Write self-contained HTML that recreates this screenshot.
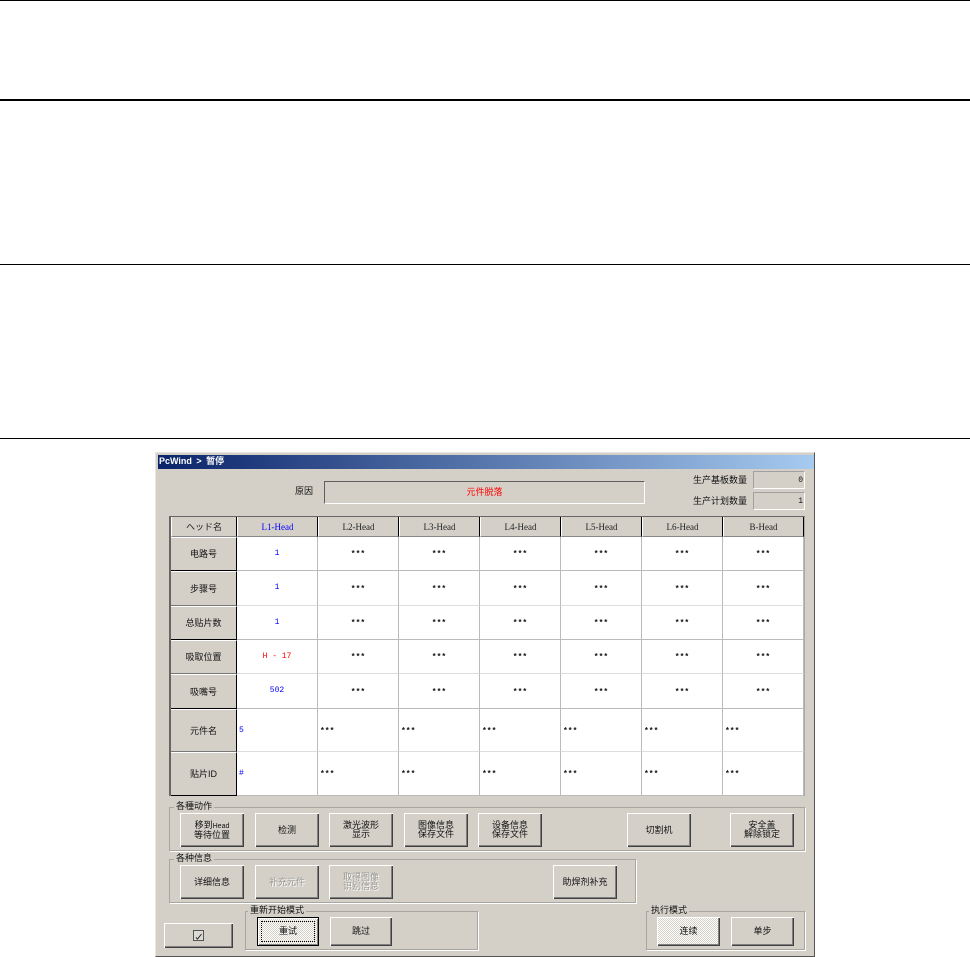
<!DOCTYPE html>
<html lang="zh">
<head>
<meta charset="utf-8">
<title>PcWind</title>
<style>
html,body{margin:0;padding:0;background:#fff;}
body{position:relative;width:970px;height:957px;overflow:hidden;font-family:"Liberation Sans","WenQuanYi Zen Hei","Noto Sans CJK SC",sans-serif;font-size:9px;color:#111;}
div{box-sizing:border-box;position:absolute;}
.line{left:0;width:970px;background:#000;}
#win{left:155px;top:452px;width:660px;height:505px;background:#d4d0c8;border-top:1px solid #e8e6e0;border-left:1px solid #e8e6e0;border-right:1px solid #555;border-bottom:1px solid #555;}
#title{left:158px;top:455px;width:656px;height:14px;background:linear-gradient(90deg,#0a246a,#a6caf0);color:#fff;font-size:9px;line-height:13px;padding-left:1px;font-weight:bold;word-spacing:2px;}
.t{white-space:nowrap;line-height:12px;}
.sunk{background:#d4d0c8;border-top:1px solid #606060;border-left:1px solid #606060;border-right:1px solid #fff;border-bottom:1px solid #fff;}
.val{border-top-color:#a0a0a0;border-left-color:#a0a0a0;text-align:right;padding-right:1px;line-height:18px;font-family:"Liberation Mono",monospace;font-size:8px;}
#tbwrap{left:169px;top:516px;width:636px;height:280px;background:#fff;border-top:1px solid #666;border-left:2px solid #666;border-right:1px solid #aaa;border-bottom:1px solid #888;}
table{position:absolute;left:0;top:0;border-collapse:separate;border-spacing:0;table-layout:fixed;width:633px;}
td{padding:0;margin:0;box-sizing:border-box;text-align:center;vertical-align:middle;border-right:1px solid #bbb;border-bottom:1px solid #bbb;font-family:"Liberation Mono","WenQuanYi Zen Hei",monospace;font-size:8px;line-height:10px;overflow:hidden;background:#fff;color:#111;}
tr.h td{background:#d4d0c8;border-right:1px solid #000;border-left:1px solid #fff;border-bottom:1px solid #888;font-family:"Liberation Serif","Liberation Mono",serif;font-size:9px;color:#222;}
td.r{background:#d4d0c8;border-right:1px solid #000;border-top:1px solid #fff;border-bottom:1px solid #000;font-family:"Liberation Sans","WenQuanYi Zen Hei","Noto Sans CJK SC",sans-serif;font-size:9px;}
tr.l2 td.r{border-bottom-color:#777;}
td.l{text-align:left;padding-left:2px;padding-top:1px;}
td.s{font-weight:bold;padding-top:3px;}
tr.l2 td:not(.r){border-bottom-color:#ddd;}
.grp{border:1px solid #a8a6a0;box-shadow:1px 1px 0 #fff;}
.gt{background:#d4d0c8;padding:0 2px;white-space:nowrap;line-height:10px;font-size:9px;}
.btn{background:#d4d0c8;box-shadow:inset 1px 1px 0 #fff,inset -1px -1px 0 #404040,inset -2px -2px 0 #808080;text-align:center;display:flex;align-items:center;justify-content:center;line-height:9px;font-size:9px;color:#111;}
.dis{color:#9a9892;text-shadow:1px 1px 0 #fff;}
.def{border:1px solid #000;box-shadow:inset 1px 1px 0 #fff,inset -1px -1px 0 #808080;}
.dither{background-color:#d4d0c8;background-image:conic-gradient(#fff 25%,#d4d0c8 0 50%,#fff 0 75%,#d4d0c8 0);background-size:2px 2px;}
.focus{left:3px;top:3px;right:3px;bottom:3px;border:1px dotted #000;}
small{font-size:7px;}
</style>
</head>
<body>
<div class="line" style="top:0;height:1px"></div>
<div class="line" style="top:99px;height:2px"></div>
<div class="line" style="top:264px;height:1px"></div>
<div class="line" style="top:438px;height:1px"></div>

<div id="win"></div>
<div id="title">PcWind &gt; 暂停</div>

<div class="t" style="left:295px;top:485px">原因</div>
<div class="sunk" style="left:324px;top:481px;width:321px;height:23px;color:#f00;text-align:center;line-height:20px">元件脱落</div>

<div class="t" style="left:693px;top:474px">生产基板数量</div>
<div class="sunk val" style="left:753px;top:471px;width:52px;height:18px">0</div>
<div class="t" style="left:693px;top:495px">生产计划数量</div>
<div class="sunk val" style="left:753px;top:492px;width:52px;height:18px">1</div>

<div id="tbwrap">
<table>
<colgroup><col style="width:66px"><col style="width:81px"><col style="width:81px"><col style="width:81px"><col style="width:81px"><col style="width:81px"><col style="width:81px"><col style="width:81px"></colgroup>
<tr class="h" style="height:20px"><td style="height:20px;font-family:'Liberation Sans','Noto Sans CJK JP',sans-serif;font-size:9px">ヘッド名</td><td style="color:#00f">L1-Head</td><td>L2-Head</td><td>L3-Head</td><td>L4-Head</td><td>L5-Head</td><td>L6-Head</td><td>B-Head</td></tr>
<tr><td class="r" style="height:34px">电路号</td><td style="color:#00f">1</td><td class="s">***</td><td class="s">***</td><td class="s">***</td><td class="s">***</td><td class="s">***</td><td class="s">***</td></tr>
<tr class="l2"><td class="r" style="height:35px">步骤号</td><td style="color:#00f">1</td><td class="s">***</td><td class="s">***</td><td class="s">***</td><td class="s">***</td><td class="s">***</td><td class="s">***</td></tr>
<tr><td class="r" style="height:34px">总贴片数</td><td style="color:#00f">1</td><td class="s">***</td><td class="s">***</td><td class="s">***</td><td class="s">***</td><td class="s">***</td><td class="s">***</td></tr>
<tr class="l2"><td class="r" style="height:34px">吸取位置</td><td style="color:#f00">H - 17</td><td class="s">***</td><td class="s">***</td><td class="s">***</td><td class="s">***</td><td class="s">***</td><td class="s">***</td></tr>
<tr><td class="r" style="height:35px">吸嘴号</td><td style="color:#00f">502</td><td class="s">***</td><td class="s">***</td><td class="s">***</td><td class="s">***</td><td class="s">***</td><td class="s">***</td></tr>
<tr class="l2"><td class="r" style="height:43px">元件名</td><td class="l" style="color:#00f">5</td><td class="l s">***</td><td class="l s">***</td><td class="l s">***</td><td class="l s">***</td><td class="l s">***</td><td class="l s">***</td></tr>
<tr><td class="r" style="height:44px">贴片ID</td><td class="l" style="color:#00f">#</td><td class="l s">***</td><td class="l s">***</td><td class="l s">***</td><td class="l s">***</td><td class="l s">***</td><td class="l s">***</td></tr>
</table>
</div>

<div class="grp" style="left:169px;top:807px;width:636px;height:44px"></div>
<div class="gt" style="left:174px;top:801px">各種动作</div>
<div class="btn" style="left:180px;top:813px;width:64px;height:34px"><span>移到<small>Head</small><br>等待位置</span></div>
<div class="btn" style="left:255px;top:813px;width:64px;height:34px">检测</div>
<div class="btn" style="left:329px;top:813px;width:64px;height:34px"><span>激光波形<br>显示</span></div>
<div class="btn" style="left:404px;top:813px;width:64px;height:34px"><span>图像信息<br>保存文件</span></div>
<div class="btn" style="left:478px;top:813px;width:64px;height:34px"><span>设备信息<br>保存文件</span></div>
<div class="btn" style="left:627px;top:813px;width:64px;height:34px">切割机</div>
<div class="btn" style="left:730px;top:813px;width:64px;height:34px"><span>安全盖<br>解除锁定</span></div>

<div class="grp" style="left:169px;top:859px;width:467px;height:44px"></div>
<div class="gt" style="left:174px;top:853px">各种信息</div>
<div class="btn" style="left:180px;top:865px;width:64px;height:34px">详细信息</div>
<div class="btn dis" style="left:255px;top:865px;width:64px;height:34px">补充元件</div>
<div class="btn dis" style="left:329px;top:865px;width:64px;height:34px"><span>取得图像<br>识别信息</span></div>
<div class="btn" style="left:553px;top:865px;width:64px;height:34px">助焊剂补充</div>

<div class="btn" style="left:164px;top:923px;width:69px;height:25px"></div>
<svg style="position:absolute;left:193px;top:930px" width="11" height="11" viewBox="0 0 11 11"><rect x="0.5" y="0.5" width="10" height="10" fill="#dcdad4" stroke="#555"/><path d="M3 7.5 L4.5 9 L8.5 4" fill="none" stroke="#222" stroke-width="1"/></svg>

<div class="grp" style="left:245px;top:911px;width:233px;height:39px"></div>
<div class="gt" style="left:248px;top:905px">重新开始模式</div>
<div class="btn def dither" style="left:257px;top:917px;width:62px;height:29px"><div class="focus"></div><span style="position:relative">重试</span></div>
<div class="btn" style="left:330px;top:917px;width:62px;height:29px">跳过</div>

<div class="grp" style="left:646px;top:911px;width:159px;height:39px"></div>
<div class="gt" style="left:649px;top:905px">执行模式</div>
<div class="btn dither" style="left:657px;top:917px;width:63px;height:29px">连续</div>
<div class="btn" style="left:731px;top:917px;width:63px;height:29px">单步</div>
</body>
</html>
